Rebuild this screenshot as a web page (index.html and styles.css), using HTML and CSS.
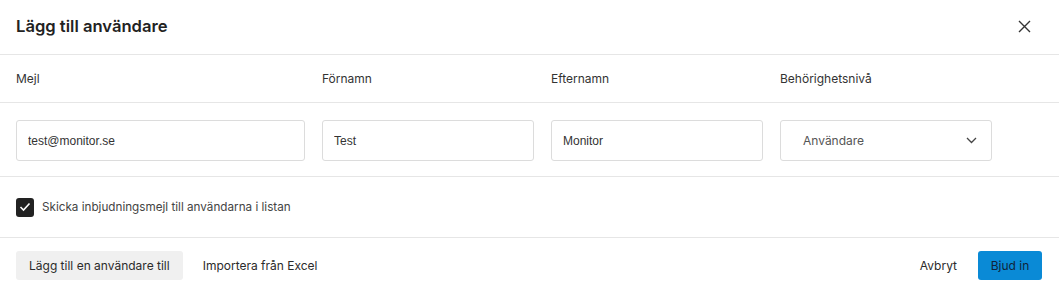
FILE: index.html
```html
<!DOCTYPE html>
<html lang="sv">
<head>
    <meta charset="UTF-8">
    <meta name="viewport" content="width=device-width, initial-scale=1.0">
    <title>Lägg till användare</title>
    <link rel="stylesheet" href="styles.css">
</head>
<body>

<div class="modal">
    <div class="modalHeader">
        <h1>Lägg till användare</h1>
        <button class="closeBtn" aria-label="Stäng">
            <svg width="13" height="13" viewBox="0 0 13 13"><path d="M1 1L12 12M12 1L1 12" stroke="#333" stroke-width="1.4" fill="none"/></svg>
        </button>
    </div>

    <div class="userGrid headRow">
        <div>Mejl</div>
        <div>Förnamn</div>
        <div>Efternamn</div>
        <div>Behörighetsnivå</div>
    </div>

    <div class="userGrid inputRow">
        <input type="text" class="field" value="test@monitor.se">
        <input type="text" class="field" value="Test">
        <input type="text" class="field" value="Monitor">
        <div class="field select">
            <span>Användare</span>
            <svg width="11" height="7" viewBox="0 0 11 7"><path d="M1 1L5.5 5.5L10 1" stroke="#444" stroke-width="1.3" fill="none"/></svg>
        </div>
    </div>

    <div class="optionRow">
        <label class="check">
            <span class="box">
                <svg width="12" height="10" viewBox="0 0 12 10"><path d="M1.5 5L4.5 8L10.5 1.5" stroke="#fff" stroke-width="1.6" fill="none"/></svg>
            </span>
            Skicka inbjudningsmejl till användarna i listan
        </label>
    </div>

    <div class="modalFooter">
        <div class="left">
            <button class="btn grey">Lägg till en användare till</button>
            <button class="btn plain">Importera från Excel</button>
        </div>
        <div class="right">
            <button class="btn plain">Avbryt</button>
            <button class="btn primary">Bjud in</button>
        </div>
    </div>
</div>

</body>
</html>
```

FILE: styles.css
```css
body {
    margin: 0;
    background-color: white;
    font-family: Inter, "Noto Sans", sans-serif;
    font-size: 12px;
    color: #2b2b2b;
}
.modal {
    width: 1059px;
}
.modalHeader {
    height: 55px;
    box-sizing: border-box;
    border-bottom: 1px solid #e6e6e6;
    display: flex;
    align-items: center;
    justify-content: space-between;
    padding: 0 28px 2px 16px;
}
.modalHeader h1 {
    margin: 0;
    font-size: 16.6px;
    font-weight: 600;
    color: #222;
}
.closeBtn {
    border: none;
    background: none;
    padding: 0;
    display: flex;
    cursor: pointer;
}
.userGrid {
    display: grid;
    grid-template-columns: 289px 212px 212px 212px;
    column-gap: 17px;
    padding: 0 16px;
    border-bottom: 1px solid #e6e6e6;
}
.headRow {
    height: 47px;
    align-items: center;
    color: #333;
}
.inputRow {
    padding-top: 17px;
    padding-bottom: 15px;
}
.field {
    height: 41px;
    box-sizing: border-box;
    border: 1px solid #dcdcdc;
    border-radius: 3px;
    padding: 0 11px;
    font-family: "Liberation Sans", Arial, sans-serif;
    font-size: 12px;
    color: #333;
    background: white;
    outline: none;
}
.select {
    display: flex;
    align-items: center;
    justify-content: space-between;
    padding: 0 14px 0 22px;
    font-family: Inter, sans-serif;
    color: #555;
}
.optionRow {
    height: 61px;
    box-sizing: border-box;
    border-bottom: 1px solid #e6e6e6;
    padding: 0 16px;
    display: flex;
    align-items: center;
}
.check {
    display: flex;
    align-items: center;
    gap: 8px;
    font-size: 11.7px;
    color: #444;
}
.box {
    width: 18px;
    height: 19px;
    border-radius: 3px;
    background-color: #222;
    display: flex;
    align-items: center;
    justify-content: center;
}
.modalFooter {
    display: flex;
    justify-content: space-between;
    padding: 13px 17px 0 16px;
}
.left, .right {
    display: flex;
    align-items: center;
}
.btn {
    height: 29px;
    border: none;
    border-radius: 3px;
    font-family: Inter, sans-serif;
    font-size: 12px;
    color: #2b2b2b;
    cursor: pointer;
    padding: 0 13px;
    background: none;
}
.btn.grey {
    background-color: #f0f0f0;
    margin-right: 7px;
}
.right .btn.plain {
    margin-right: 8px;
}
.btn.primary {
    background-color: #0a8ad6;
    color: #10243a;
    width: 64px;
    padding: 0;
}
```
